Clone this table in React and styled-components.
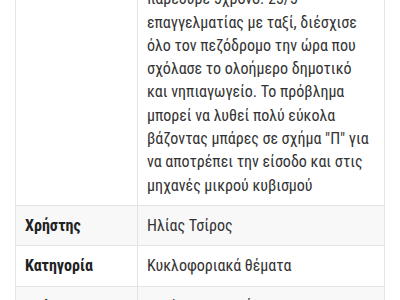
import React from "react";
import styled, { createGlobalStyle } from "styled-components";

const Global = createGlobalStyle`
  html, body { margin: 0; padding: 0; background: #fff; overflow: hidden; }
  body { font-family: Roboto, "Noto Sans", sans-serif; }
`;

const Page = styled.div`
  padding: 0 15px;
`;

const Table = styled.table`
  width: 370px;
  table-layout: fixed;
  border-collapse: collapse;
  margin-top: -45px;
  font-family: Roboto, "Noto Sans", sans-serif;
  font-stretch: condensed;
  font-size: 16px;
  line-height: 23.3px;
  color: #333;
`;

const Row = styled.tr`
  background: ${(p) => (p.$striped ? "#f8f8f8" : "#fff")};
`;

const LabelCol = styled.col`
  width: 122px;
`;

const Label = styled.th`
  text-align: left;
  vertical-align: top;
  font-weight: 700;
  color: #222;
  padding: 8px 9px;
  border: 1px solid #e3e3e3;
`;

const Value = styled.td`
  vertical-align: top;
  padding: 8px 9px;
  border: 1px solid #e3e3e3;
  font-weight: 400;
`;

const rows = [
  {
    label: "Περιγραφή",
    value:
      "Στις 24/5 ένα ΙΧ αυτοκίνητο παρέσυρε 5χρονο. 25/5 επαγγελματίας με ταξί, διέσχισε όλο τον πεζόδρομο την ώρα που σχόλασε το ολοήμερο δημοτικό και νηπιαγωγείο. Το πρόβλημα μπορεί να λυθεί πολύ εύκολα βάζοντας μπάρες σε σχήμα \"Π\" για να αποτρέπει την είσοδο και στις μηχανές μικρού κυβισμού",
  },
  { label: "Χρήστης", value: "Ηλίας Τσίρος" },
  { label: "Κατηγορία", value: "Κυκλοφοριακά θέματα" },
  { label: "Ανάρτηση", value: "Τετάρτη, 29 Μαΐου 2019 - 14:55" },
];

export default function App() {
  return (
    <Page>
      <Global />
      <Table>
        <colgroup>
          <LabelCol />
          <col />
        </colgroup>
        <tbody>
          {rows.map((r, i) => (
            <Row key={r.label} $striped={i % 2 === 1}>
              <Label>{r.label}</Label>
              <Value>{r.value}</Value>
            </Row>
          ))}
        </tbody>
      </Table>
    </Page>
  );
}
